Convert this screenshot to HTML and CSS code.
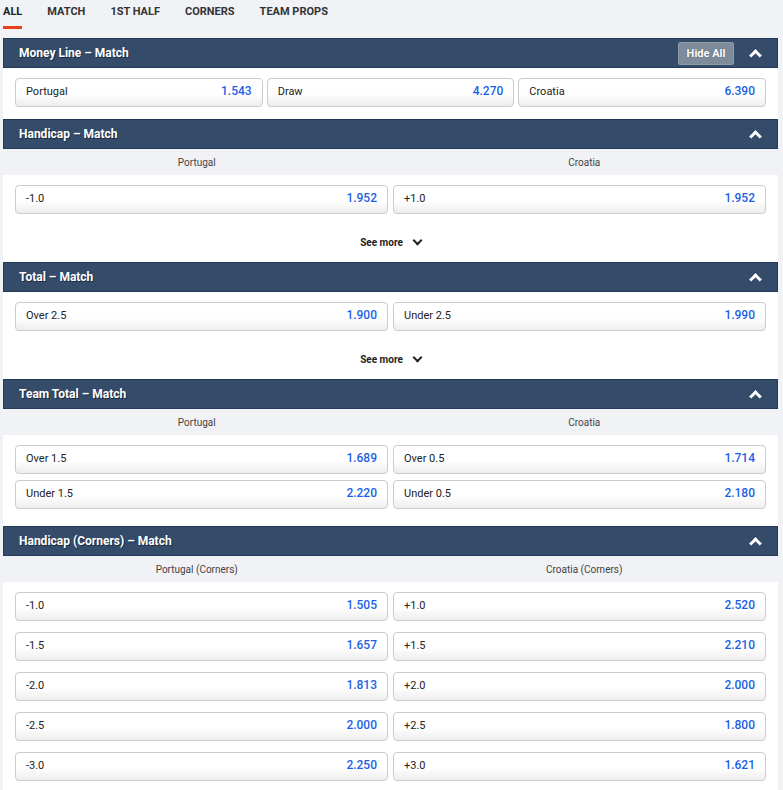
FILE: index.html
```html
<!DOCTYPE html>
<html lang="en">
<head>
    <meta charset="UTF-8">
    <meta name="viewport" content="width=device-width, initial-scale=1.0">
    <title>Portugal vs Croatia - Markets</title>
    <link rel="stylesheet" href="styles.css">
</head>
<body>
    <div class="markets">
        <nav class="market-tabs">
            <a href="#" class="active">ALL</a>
            <a href="#">MATCH</a>
            <a href="#">1ST HALF</a>
            <a href="#">CORNERS</a>
            <a href="#">TEAM PROPS</a>
        </nav>

        <!-- Money Line -->
        <section class="market">
            <div class="market-header">
                <span class="market-title">Money Line – Match</span>
                <button class="hide-all">Hide All</button>
                <span class="chevron-up"></span>
            </div>
            <div class="market-body">
                <div class="odds-grid cols-3">
                    <div class="odd"><span class="odd-label">Portugal</span><span class="odd-price">1.543</span></div>
                    <div class="odd"><span class="odd-label">Draw</span><span class="odd-price">4.270</span></div>
                    <div class="odd"><span class="odd-label">Croatia</span><span class="odd-price">6.390</span></div>
                </div>
            </div>
        </section>

        <!-- Handicap -->
        <section class="market">
            <div class="market-header">
                <span class="market-title">Handicap – Match</span>
                <span class="chevron-up"></span>
            </div>
            <div class="col-labels">
                <span>Portugal</span>
                <span>Croatia</span>
            </div>
            <div class="market-body">
                <div class="odds-grid cols-2">
                    <div class="odd"><span class="odd-label">-1.0</span><span class="odd-price">1.952</span></div>
                    <div class="odd"><span class="odd-label">+1.0</span><span class="odd-price">1.952</span></div>
                </div>
            </div>
            <div class="see-more">See more <span class="chevron-down"></span></div>
        </section>

        <!-- Total -->
        <section class="market">
            <div class="market-header">
                <span class="market-title">Total – Match</span>
                <span class="chevron-up"></span>
            </div>
            <div class="market-body">
                <div class="odds-grid cols-2">
                    <div class="odd"><span class="odd-label">Over 2.5</span><span class="odd-price">1.900</span></div>
                    <div class="odd"><span class="odd-label">Under 2.5</span><span class="odd-price">1.990</span></div>
                </div>
            </div>
            <div class="see-more">See more <span class="chevron-down"></span></div>
        </section>

        <!-- Team Total -->
        <section class="market">
            <div class="market-header">
                <span class="market-title">Team Total – Match</span>
                <span class="chevron-up"></span>
            </div>
            <div class="col-labels">
                <span>Portugal</span>
                <span>Croatia</span>
            </div>
            <div class="market-body tall">
                <div class="odds-grid cols-2 rows-tight">
                    <div class="odd"><span class="odd-label">Over 1.5</span><span class="odd-price">1.689</span></div>
                    <div class="odd"><span class="odd-label">Over 0.5</span><span class="odd-price">1.714</span></div>
                    <div class="odd"><span class="odd-label">Under 1.5</span><span class="odd-price">2.220</span></div>
                    <div class="odd"><span class="odd-label">Under 0.5</span><span class="odd-price">2.180</span></div>
                </div>
            </div>
        </section>

        <!-- Handicap (Corners) -->
        <section class="market">
            <div class="market-header">
                <span class="market-title">Handicap (Corners) – Match</span>
                <span class="chevron-up"></span>
            </div>
            <div class="col-labels">
                <span>Portugal (Corners)</span>
                <span>Croatia (Corners)</span>
            </div>
            <div class="market-body">
                <div class="odds-grid cols-2 rows-wide">
                    <div class="odd"><span class="odd-label">-1.0</span><span class="odd-price">1.505</span></div>
                    <div class="odd"><span class="odd-label">+1.0</span><span class="odd-price">2.520</span></div>
                    <div class="odd"><span class="odd-label">-1.5</span><span class="odd-price">1.657</span></div>
                    <div class="odd"><span class="odd-label">+1.5</span><span class="odd-price">2.210</span></div>
                    <div class="odd"><span class="odd-label">-2.0</span><span class="odd-price">1.813</span></div>
                    <div class="odd"><span class="odd-label">+2.0</span><span class="odd-price">2.000</span></div>
                    <div class="odd"><span class="odd-label">-2.5</span><span class="odd-price">2.000</span></div>
                    <div class="odd"><span class="odd-label">+2.5</span><span class="odd-price">1.800</span></div>
                    <div class="odd"><span class="odd-label">-3.0</span><span class="odd-price">2.250</span></div>
                    <div class="odd"><span class="odd-label">+3.0</span><span class="odd-price">1.621</span></div>
                </div>
            </div>
        </section>
    </div>
</body>
</html>
```

FILE: styles.css
```css
:root {
    --header-blue: #344c69;
    --header-border: #22395a;
    --odds-blue: #1b5fe6;
    --tab-red: #e8401c;
    --page-bg: #f1f2f6;
}

* {
    box-sizing: border-box;
    margin: 0;
    padding: 0;
    font-family: Roboto, 'Liberation Sans', Arial, sans-serif;
}

body {
    background: var(--page-bg);
    color: #222;
}

.markets {
    padding: 0 5px 0 3px;
}

/* Tabs */
.market-tabs {
    display: flex;
    gap: 25px;
    height: 38px;
}

.market-tabs a {
    display: block;
    height: 29px;
    padding-top: 5px;
    font-size: 11px;
    line-height: 14px;
    font-weight: 700;
    color: #333;
    text-decoration: none;
    border-bottom: 3px solid transparent;
}

.market-tabs a.active {
    color: #222;
    border-bottom-color: var(--tab-red);
}

/* Market header */
.market-header {
    display: flex;
    align-items: center;
    height: 30px;
    padding: 0 15px;
    background: var(--header-blue);
    border: 1px solid var(--header-border);
}

.market-title {
    flex: 1;
    font-size: 12px;
    font-weight: 700;
    color: #fff;
    text-shadow: 1px 1px 0 #1a2a40;
}

.hide-all {
    width: 56px;
    height: 23px;
    margin-right: 17px;
    border: 1px solid #8e9aa8;
    border-radius: 2px;
    background: #7e8b9a;
    color: #fff;
    font-size: 11px;
    font-weight: 700;
    text-shadow: 0 0 1px #44505e;
    cursor: pointer;
}

.chevron-up {
    width: 9px;
    height: 9px;
    margin: 5px 2px 0 0;
    border-left: 3px solid #fff;
    border-top: 3px solid #fff;
    transform: rotate(45deg);
}

/* Column labels */
.col-labels {
    display: grid;
    grid-template-columns: 1fr 1fr;
    height: 26px;
    align-items: center;
    text-align: center;
    font-size: 10px;
    color: #444;
}

/* Market body */
.market-body {
    background: #fff;
    padding: 10px 12px 12px;
}

.market-body.tall {
    padding-bottom: 17px;
}

.odds-grid {
    display: grid;
    column-gap: 4px;
}

.odds-grid.cols-3 {
    grid-template-columns: repeat(3, 1fr);
}

.odds-grid.cols-2 {
    grid-template-columns: 1fr 1fr;
    column-gap: 5px;
}

.odds-grid.rows-tight {
    row-gap: 6px;
}

.odds-grid.rows-wide {
    row-gap: 11px;
}

.odd {
    display: flex;
    justify-content: space-between;
    align-items: center;
    height: 29px;
    padding: 0 10px 3px 10px;
    border: 1px solid #cbcbcb;
    border-radius: 4px;
    background: linear-gradient(#fff 55%, #ededed);
    cursor: pointer;
}

.odd-label {
    font-size: 11px;
    color: #222;
}

.odd-price {
    font-size: 12px;
    font-weight: 500;
    color: var(--odds-blue);
}

/* See more */
.see-more {
    display: flex;
    justify-content: center;
    align-items: center;
    gap: 11px;
    height: 36px;
    padding-bottom: 4px;
    background: #fff;
    font-size: 10px;
    font-weight: 700;
    color: #222;
}

.chevron-down {
    width: 7px;
    height: 7px;
    margin-top: -4px;
    border-right: 2px solid #222;
    border-bottom: 2px solid #222;
    transform: rotate(45deg);
}
```
